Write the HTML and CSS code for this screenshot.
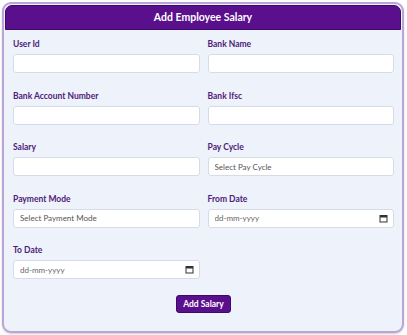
FILE: index.html
```html
<!DOCTYPE html>
<html lang="en">
  <head>
    <meta charset="UTF-8" />
    <meta name="viewport" content="width=device-width, initial-scale=1.0" />
    <title>Add Employee Salary</title>
    <link rel="stylesheet" href="styles.css">
  </head>
  <body>
    <div class="salary-card">
      <!-- Header -->
      <div class="card-header">Add Employee Salary</div>

      <!-- Form -->
      <form class="salary-form">
        <div class="form-grid">
          <div class="field">
            <label for="user-id">User Id</label>
            <input type="text" id="user-id" />
          </div>
          <div class="field">
            <label for="bank-name">Bank Name</label>
            <input type="text" id="bank-name" />
          </div>
          <div class="field">
            <label for="account-no">Bank Account Number</label>
            <input type="text" id="account-no" />
          </div>
          <div class="field">
            <label for="ifsc">Bank Ifsc</label>
            <input type="text" id="ifsc" />
          </div>
          <div class="field">
            <label for="salary">Salary</label>
            <input type="text" id="salary" />
          </div>
          <div class="field">
            <label for="pay-cycle">Pay Cycle</label>
            <select id="pay-cycle">
              <option>Select Pay Cycle</option>
              <option>Monthly</option>
              <option>Weekly</option>
            </select>
          </div>
          <div class="field">
            <label for="payment-mode">Payment Mode</label>
            <select id="payment-mode">
              <option>Select Payment Mode</option>
              <option>Bank Transfer</option>
              <option>Cash</option>
            </select>
          </div>
          <div class="field">
            <label for="from-date">From Date</label>
            <div class="date-box">
              <input type="text" id="from-date" placeholder="dd-mm-yyyy" />
              <svg class="cal-icon" width="9" height="9" viewBox="0 0 9 9">
                <rect x="1" y="1.5" width="7" height="6.5" fill="none" stroke="#333" stroke-width="1" />
                <rect x="1" y="1.5" width="7" height="2" fill="#333" />
              </svg>
            </div>
          </div>
          <div class="field">
            <label for="to-date">To Date</label>
            <div class="date-box">
              <input type="text" id="to-date" placeholder="dd-mm-yyyy" />
              <svg class="cal-icon" width="9" height="9" viewBox="0 0 9 9">
                <rect x="1" y="1.5" width="7" height="6.5" fill="none" stroke="#333" stroke-width="1" />
                <rect x="1" y="1.5" width="7" height="2" fill="#333" />
              </svg>
            </div>
          </div>
        </div>

        <div class="actions">
          <button type="button" class="submit-btn">Add Salary</button>
        </div>
      </form>
    </div>
  </body>
</html>
```

FILE: styles.css
```css
body {
  font-family: Lato, "Open Sans", sans-serif;
  margin: 0;
  padding: 2px 3px 2px 2px;
  background-color: #ffffff;
}

/* Card */
.salary-card {
  background-color: #eef2fb;
  border: 2px solid #b9a6d6;
  border-radius: 9px;
  box-shadow: 0 1px 2px rgba(0, 0, 0, 0.2);
  overflow: hidden;
}

.card-header {
  background-color: #5a0f8c;
  border: 1px solid #3e0866;
  border-radius: 7px 7px 0 0;
  color: white;
  font-weight: bold;
  font-size: 10.5px;
  text-align: center;
  height: 23px;
  line-height: 23px;
  margin: 1px 1px 0 1px;
}

/* Form */
.salary-form {
  padding: 8px 8px 18px 9px;
}

.form-grid {
  display: grid;
  grid-template-columns: 1fr 1fr;
  column-gap: 8px;
  row-gap: 16.5px;
}

.field label {
  display: block;
  font-size: 8.5px;
  font-weight: bold;
  color: #4d2177;
  line-height: 13px;
  margin-bottom: 3px;
}

.field input,
.field select {
  display: block;
  box-sizing: border-box;
  width: 100%;
  height: 19px;
  margin: 0;
  padding: 0 6px;
  background-color: white;
  border: 1px solid #d6dce6;
  border-radius: 3px;
  font-family: Lato, "Open Sans", sans-serif;
  font-size: 8px;
  color: #555;
  -webkit-appearance: none;
  appearance: none;
  outline: none;
}

.field input::placeholder {
  color: #666;
}

.date-box {
  position: relative;
}

.cal-icon {
  position: absolute;
  right: 6px;
  top: 5px;
}

.actions {
  display: flex;
  justify-content: center;
  margin-top: 16px;
}

.submit-btn {
  background-color: #5a0f8c;
  color: white;
  font-family: Lato, "Open Sans", sans-serif;
  font-weight: bold;
  font-size: 8.5px;
  height: 18px;
  padding: 0 6px;
  border: 1px solid #3e0866;
  border-radius: 3px;
  cursor: pointer;
}
```
